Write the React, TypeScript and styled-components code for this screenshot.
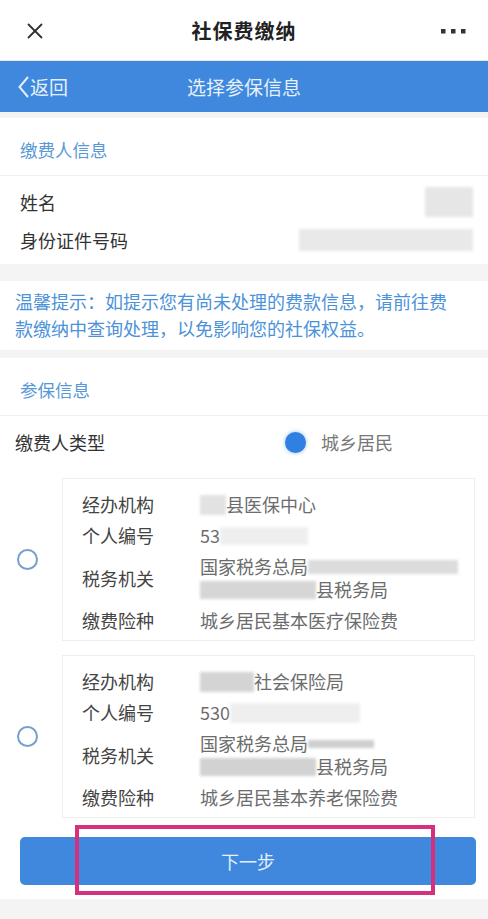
import React from 'react';
import styled, {createGlobalStyle} from 'styled-components';
import {X} from 'lucide-react';

const GlobalStyle = createGlobalStyle`
    html, body {
        margin: 0;
        padding: 0;
        background: #f4f4f4;
        font-family: "Noto Sans CJK SC", "Noto Sans", sans-serif;
    }
`;

interface Redaction {
    w: number;
    h?: number;
    tone?: string;
}

interface ValuePart {
    text?: string;
    redact?: Redaction;
}

interface CardRow {
    label: string;
    lines: ValuePart[][];
}

const cards: CardRow[][] = [
    [
        {label: '经办机构', lines: [[{redact: {w: 26, h: 20, tone: '#e2e2e2'}}, {text: '县医保中心'}]]},
        {label: '个人编号', lines: [[{text: '53'}, {redact: {w: 88, h: 18, tone: '#efefef'}}]]},
        {label: '税务机关', lines: [
            [{text: '国家税务总局'}, {redact: {w: 150, h: 14, tone: '#dcdcdc'}}],
            [{redact: {w: 116, h: 18, tone: '#d6d6d6'}}, {text: '县税务局'}],
        ]},
        {label: '缴费险种', lines: [[{text: '城乡居民基本医疗保险费'}]]},
    ],
    [
        {label: '经办机构', lines: [[{redact: {w: 54, h: 20, tone: '#d4d4d4'}}, {text: '社会保险局'}]]},
        {label: '个人编号', lines: [[{text: '530'}, {redact: {w: 130, h: 20, tone: '#efefef'}}]]},
        {label: '税务机关', lines: [
            [{text: '国家税务总局'}, {redact: {w: 66, h: 8, tone: '#cfcfcf'}}],
            [{redact: {w: 116, h: 18, tone: '#d2d2d2'}}, {text: '县税务局'}],
        ]},
        {label: '缴费险种', lines: [[{text: '城乡居民基本养老保险费'}]]},
    ],
];

const App = () => {
    return (
        <Page>
            <GlobalStyle/>
            <TopBar>
                <TopIcon><X size={26} strokeWidth={1.7} color='#333'/></TopIcon>
                <TopTitle>{'社保费缴纳'}</TopTitle>
                <TopMore>
                    <svg width='26' height='6' viewBox='0 0 26 6'>
                        <rect x='0' y='1' width='4.5' height='4.5' fill='#333'/>
                        <rect x='10' y='1' width='4.5' height='4.5' fill='#333'/>
                        <rect x='20' y='1' width='4.5' height='4.5' fill='#333'/>
                    </svg>
                </TopMore>
            </TopBar>
            <NavBar>
                <BackLink>
                    <svg width='11' height='22' viewBox='0 0 11 22'>
                        <polyline points='10,1 1.5,11 10,21' fill='none' stroke='#e3eefa' strokeWidth='2'/>
                    </svg>
                    {'返回'}
                </BackLink>
                <NavTitle>{'选择参保信息'}</NavTitle>
                <span/>
            </NavBar>

            <Panel $gap={6}>
                <SectionHead>{'缴费人信息'}</SectionHead>
                <InfoRows>
                    <InfoRow>
                        <InfoLabel>{'姓名'}</InfoLabel>
                        <Blur $w={48} $h={30} $tone='#e6e6e6'/>
                    </InfoRow>
                    <InfoRow>
                        <InfoLabel>{'身份证件号码'}</InfoLabel>
                        <Blur $w={174} $h={22} $tone='#e9e9e9'/>
                    </InfoRow>
                </InfoRows>
            </Panel>

            <Panel $gap={17}>
                <Tip>{'温馨提示：如提示您有尚未处理的费款信息，请前往费款缴纳中查询处理，以免影响您的社保权益。'}</Tip>
            </Panel>

            <Panel $gap={8}>
                <SectionHead>{'参保信息'}</SectionHead>
                <TypeRow>
                    <InfoLabel>{'缴费人类型'}</InfoLabel>
                    <TypeChoice>
                        <Radio $checked/>
                        <ChoiceText>{'城乡居民'}</ChoiceText>
                    </TypeChoice>
                </TypeRow>
                <CardList>
                    {cards.map((rows, i) => (
                        <CardItem key={i}>
                            <RadioCol><Radio/></RadioCol>
                            <Card>
                                {rows.map((row) => (
                                    <CardLine key={row.label}>
                                        <CardLabel>{row.label}</CardLabel>
                                        <CardValue>
                                            {row.lines.map((line, j) => (
                                                <ValueLine key={j}>
                                                    {line.map((part, k) => (part.redact ? (
                                                        <Blur
                                                            key={k}
                                                            $w={part.redact.w}
                                                            $h={part.redact.h || 18}
                                                            $tone={part.redact.tone || '#e4e4e4'}
                                                        />
                                                    ) : (
                                                        <span key={k}>{part.text}</span>
                                                    )))}
                                                </ValueLine>
                                            ))}
                                        </CardValue>
                                    </CardLine>
                                ))}
                            </Card>
                        </CardItem>
                    ))}
                </CardList>
                <ButtonArea>
                    <NextButton>{'下一步'}</NextButton>
                    <Highlight/>
                </ButtonArea>
            </Panel>
        </Page>
    );
};

const Page = styled.div`
    width: 488px;
    min-height: 919px;
    background: #f4f4f4;
`;

const TopBar = styled.div`
    height: 60px;
    display: grid;
    grid-template-columns: 90px 1fr 90px;
    align-items: center;
    background: #fff;
    border-bottom: 1px solid #e8e8e8;
`;

const TopIcon = styled.div`
    display: flex;
    padding-left: 22px;
    padding-top: 2px;
`;

const TopTitle = styled.div`
    text-align: center;
    font-size: 20px;
    font-weight: 700;
    color: #222;
    letter-spacing: 1px;
`;

const TopMore = styled.div`
    display: flex;
    justify-content: flex-end;
    padding-right: 21px;
    padding-top: 2px;
`;

const NavBar = styled.div`
    height: 51px;
    display: grid;
    grid-template-columns: 90px 1fr 90px;
    align-items: center;
    background: #3f88de;
    color: #e6f0fb;
`;

const BackLink = styled.div`
    display: flex;
    align-items: center;
    gap: 1px;
    padding-left: 18px;
    font-size: 19px;
`;

const NavTitle = styled.div`
    text-align: center;
    font-size: 19px;
`;

const Panel = styled.div<{$gap: number}>`
    margin-top: ${(p) => p.$gap}px;
    background: #fff;
`;

const SectionHead = styled.div`
    box-sizing: border-box;
    height: 58px;
    display: flex;
    align-items: center;
    padding: 5px 0 0 20px;
    font-size: 17.5px;
    color: #5898d6;
    border-bottom: 1px solid #f0f0f0;
`;

const InfoRows = styled.div`
    padding: 7px 15px 5px 20px;
`;

const InfoRow = styled.div`
    height: 38px;
    display: flex;
    align-items: center;
    justify-content: space-between;
`;

const InfoLabel = styled.div`
    font-size: 18px;
    color: #333;
`;

const Blur = styled.span<{$w: number; $h: number; $tone: string}>`
    display: inline-block;
    width: ${(p) => p.$w}px;
    height: ${(p) => p.$h}px;
    background: ${(p) => p.$tone};
    filter: blur(1.5px);
    vertical-align: middle;
`;

const Tip = styled.div`
    padding: 7px 30px 8px 15px;
    font-size: 18px;
    line-height: 27px;
    color: #4b92d8;
`;

const TypeRow = styled.div`
    height: 52px;
    display: flex;
    align-items: center;
    padding-left: 15px;
`;

const TypeChoice = styled.div`
    display: flex;
    align-items: center;
    gap: 15px;
    margin-left: 180px;
`;

const ChoiceText = styled.span`
    font-size: 18px;
    color: #777;
`;

const Radio = styled.span<{$checked?: boolean}>`
    display: inline-block;
    box-sizing: border-box;
    width: 21px;
    height: 21px;
    border-radius: 50%;
    border: ${(p) => (p.$checked ? 'none' : '2px solid #739fcf')};
    background: ${(p) => (p.$checked ? '#2f80e0' : '#fff')};
    box-shadow: ${(p) => (p.$checked ? '0 0 4px rgba(47, 128, 224, 0.5)' : 'none')};
`;

const CardList = styled.div`
    display: flex;
    flex-direction: column;
    gap: 14px;
    padding-top: 10px;
`;

const CardItem = styled.div`
    display: flex;
    align-items: center;
`;

const RadioCol = styled.div`
    width: 62px;
    padding-left: 17px;
    box-sizing: border-box;
    display: flex;
`;

const Card = styled.div`
    flex: 1;
    margin-right: 13px;
    border: 1px solid #eeeeee;
    padding: 14px 0 8px 19px;
    display: flex;
    flex-direction: column;
    gap: 8px;
`;

const CardLine = styled.div`
    display: flex;
    align-items: center;
`;

const CardLabel = styled.div`
    width: 118px;
    flex-shrink: 0;
    font-size: 18px;
    line-height: 23px;
    color: #444;
`;

const CardValue = styled.div`
    font-size: 18px;
    line-height: 23px;
    color: #6c6c6c;
`;

const ValueLine = styled.div`
    display: flex;
    align-items: center;
    height: 23px;
`;

const ButtonArea = styled.div`
    position: relative;
    padding: 19px 12px 14px 20px;
`;

const NextButton = styled.div`
    height: 48px;
    display: flex;
    align-items: center;
    justify-content: center;
    border-radius: 5px;
    background: #3f88de;
    color: #e6f0fb;
    font-size: 18px;
`;

const Highlight = styled.div`
    position: absolute;
    left: 75px;
    top: 7px;
    width: 360px;
    height: 70px;
    box-sizing: border-box;
    border: 4px solid #d6307c;
    pointer-events: none;
`;

export default App;
